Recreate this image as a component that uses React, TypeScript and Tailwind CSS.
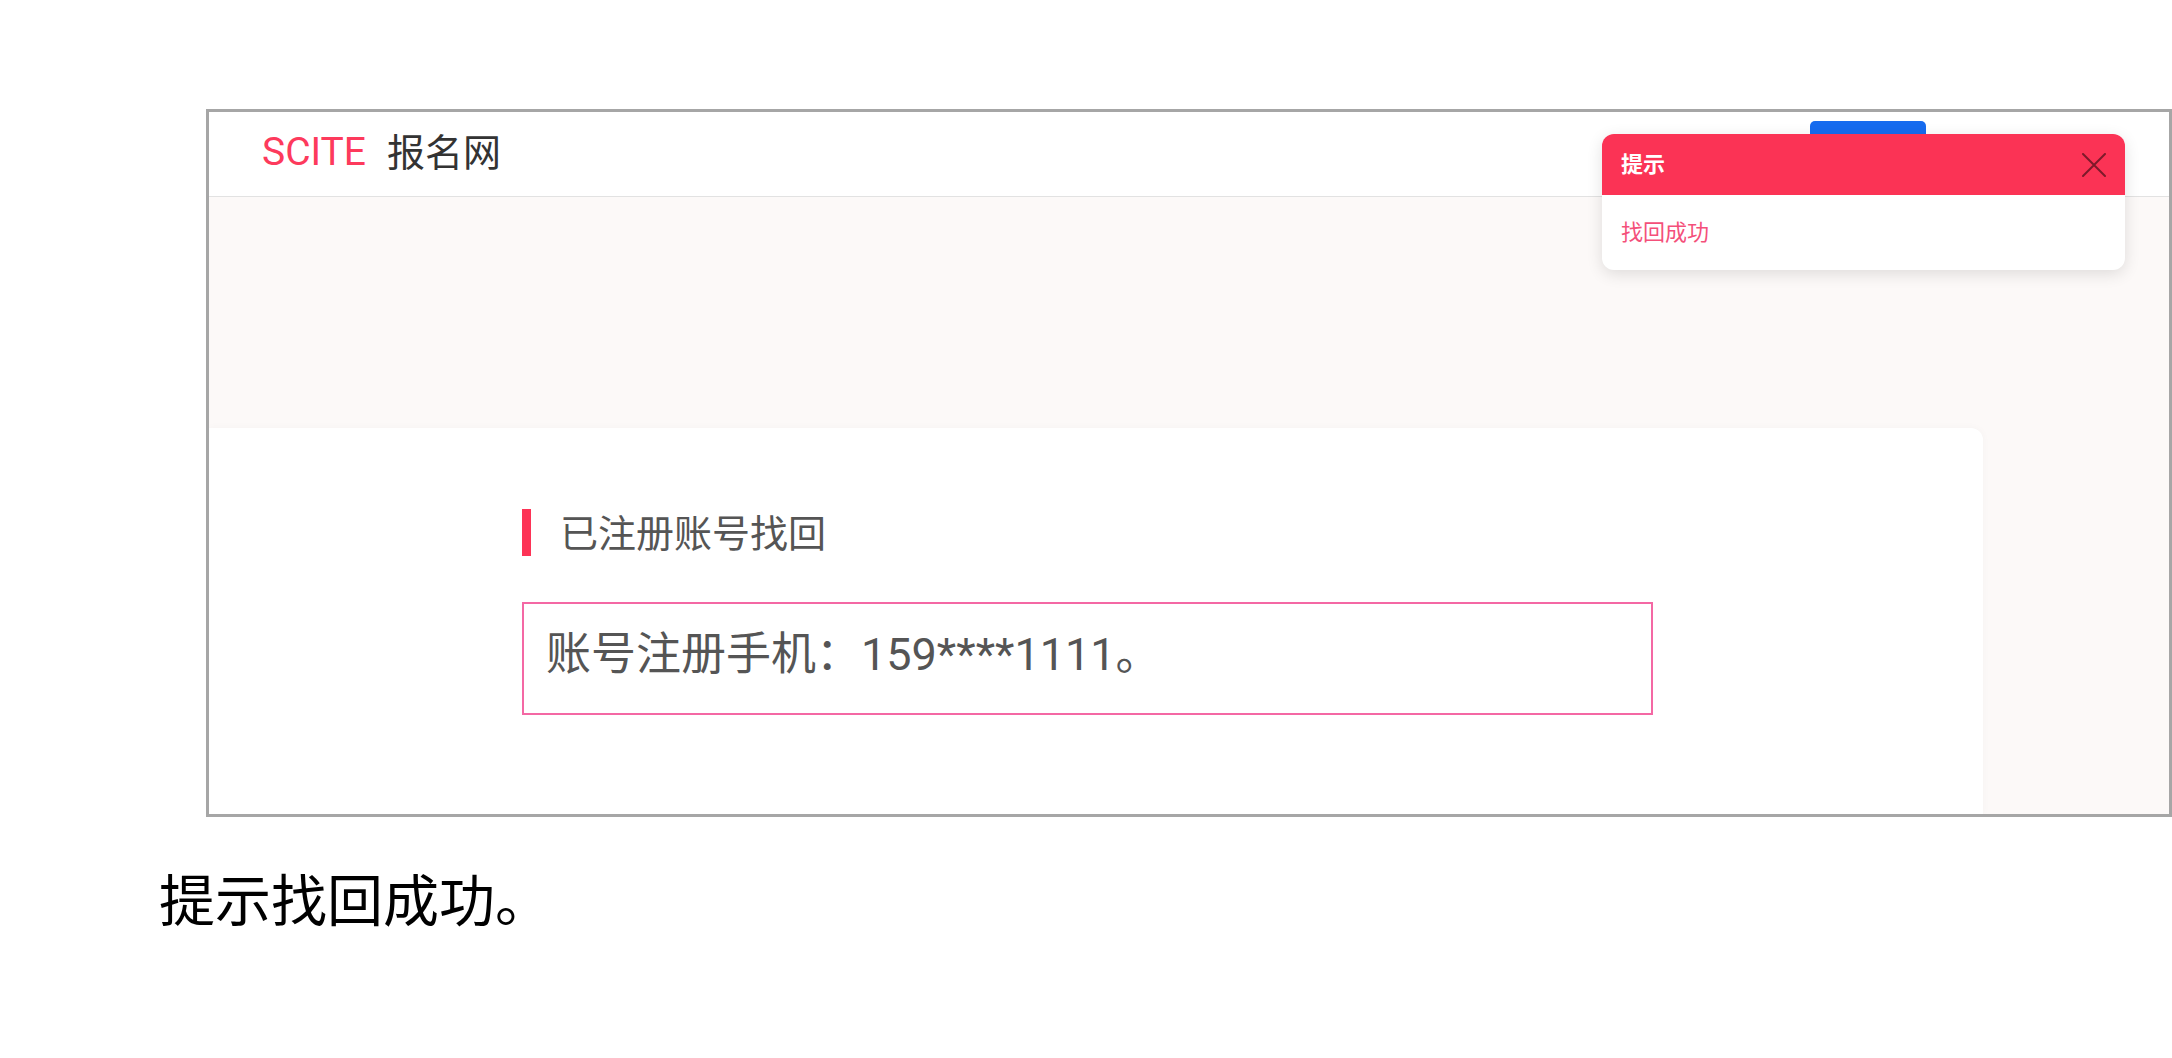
import React from "react";

export default function App() {
  return (
    <div className="w-[2172px] h-[1058px] bg-white overflow-hidden" style={{ fontFamily: "Roboto, 'Noto Sans CJK SC', sans-serif" }}>
      <div className="h-[109px]" />
      <div className="relative ml-[206px] w-[1966px] h-[708px] border-[3px] border-[#a6a6a6] overflow-hidden flex flex-col bg-[#fcf9f8]">
        {/* header */}
        <div className="h-[85px] shrink-0 bg-white border-b border-[#e2e2e2] flex items-start">
          <div className="flex items-center h-[81px] pl-[53px]">
            <span className="text-[39px] leading-none text-[#fd3a5c]">SCITE</span>
            <span className="ml-[21px] text-[38px] leading-none text-[#333333]">报名网</span>
          </div>
          <div className="ml-auto mr-[243px] mt-[9px] w-[116px] h-[56px] rounded-[5px] bg-[#166bef]" />
        </div>
        {/* main */}
        <div className="flex-1 pt-[231px]">
          <div className="w-[1774px] h-full bg-white rounded-tr-[12px] shadow-[0_0_8px_rgba(0,0,0,0.03)] pl-[313px] pt-[81px]">
            <div className="flex items-center h-[47px]">
              <div className="w-[9px] h-[47px] bg-[#fd3356]" />
              <span className="ml-[29px] mt-[2px] text-[38px] leading-none text-[#555555]">已注册账号找回</span>
            </div>
            <div className="mt-[46px] w-[1131px] h-[113px] border-2 border-[#f468a4] pl-[22px] pb-[8px] flex items-center">
              <span className="text-[45px] leading-none text-[#555555]">账号注册手机：159****1111。</span>
            </div>
          </div>
        </div>
        {/* toast */}
        <div className="absolute left-[1393px] top-[22px] w-[523px] rounded-[12px] bg-white shadow-[0_4px_16px_rgba(0,0,0,0.12)] overflow-hidden">
          <div className="h-[61px] bg-[#fb3355] flex items-center justify-between pl-[19px] pr-[19px]">
            <span className="text-[22px] font-bold text-white leading-none">提示</span>
            <svg width="24" height="24" viewBox="0 0 24 24" fill="none" stroke="rgba(0,0,0,0.5)" strokeWidth="2" strokeLinecap="round">
              <path d="M1 1L23 23M23 1L1 23" />
            </svg>
          </div>
          <div className="h-[75px] flex items-center pl-[19px]">
            <span className="text-[22px] leading-none text-[#f4507a]">找回成功</span>
          </div>
        </div>
      </div>
      <div className="mt-[52px] ml-[159px] text-[56px] leading-none text-black" style={{ fontFamily: "'Noto Sans CJK SC', sans-serif" }}>
        提示找回成功。
      </div>
    </div>
  );
}
